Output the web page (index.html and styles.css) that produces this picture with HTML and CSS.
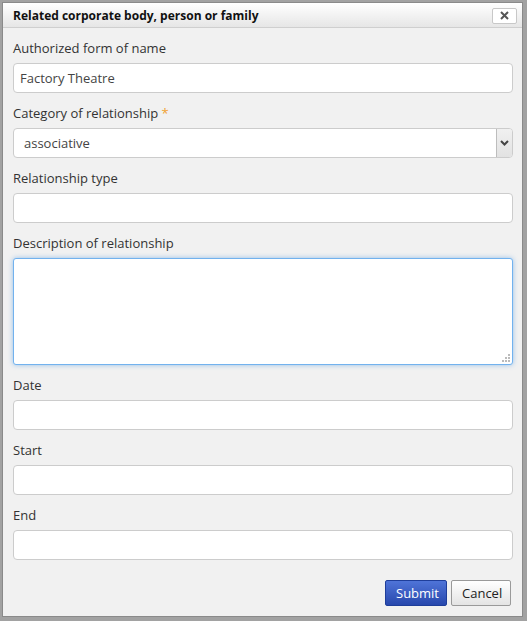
FILE: index.html
```html
<!DOCTYPE html>
<html>
<head>
<meta charset="utf-8">
<link rel="stylesheet" href="styles.css">
</head>
<body>
<div class="dialog">
  <div class="titlebar">
    <span class="title">Related corporate body, person or family</span>
    <button class="close" type="button">
      <svg width="9" height="9" viewBox="0 0 9 9"><path d="M1 1L8 8M8 1L1 8" stroke="#555" stroke-width="2"/></svg>
    </button>
  </div>
  <form class="body">
    <div class="field">
      <label>Authorized form of name</label>
      <div class="input">Factory Theatre</div>
    </div>
    <div class="field">
      <label>Category of relationship <span class="req">*</span></label>
      <div class="select">
        <span class="sel-text">associative</span>
        <span class="sel-btn"><svg width="9" height="6" viewBox="0 0 9 6"><path d="M1 1L4.5 4.5L8 1" stroke="#444" stroke-width="2" fill="none"/></svg></span>
      </div>
    </div>
    <div class="field">
      <label>Relationship type</label>
      <div class="input"></div>
    </div>
    <div class="field">
      <label>Description of relationship</label>
      <div class="textarea">
        <svg class="grip" width="9" height="9" viewBox="0 0 9 9" fill="#bbb">
          <rect x="6" y="0" width="2" height="2"/>
          <rect x="3" y="3" width="2" height="2"/><rect x="6" y="3" width="2" height="2"/>
          <rect x="0" y="6" width="2" height="2"/><rect x="3" y="6" width="2" height="2"/><rect x="6" y="6" width="2" height="2"/>
        </svg>
      </div>
    </div>
    <div class="field">
      <label>Date</label>
      <div class="input"></div>
    </div>
    <div class="field">
      <label>Start</label>
      <div class="input"></div>
    </div>
    <div class="field">
      <label>End</label>
      <div class="input"></div>
    </div>
    <div class="actions">
      <button type="button" class="btn primary">Submit</button>
      <button type="button" class="btn">Cancel</button>
    </div>
  </form>
</div>
</body>
</html>
```
FILE: styles.css
```css
html, body {
  margin: 0;
  height: 100%;
}
body {
  background: #a2a2a2;
  padding: 2px 0 0 2px;
  box-sizing: border-box;
  font-family: "Open Sans", "DejaVu Sans", sans-serif;
  font-size: 13px;
  color: #333;
}
.dialog {
  width: 521px;
  height: 615px;
  box-sizing: border-box;
  border: 1px solid #8a8a8a;
  background: #f1f1f1;
  display: flex;
  flex-direction: column;
}
.titlebar {
  height: 25px;
  box-sizing: border-box;
  background: linear-gradient(#ffffff, #e6e6e6);
  border-bottom: 1px solid #cfcfcf;
  display: flex;
  align-items: center;
  justify-content: space-between;
  padding: 0 5px 0 10px;
}
.title {
  font-weight: 700;
  font-size: 12px;
  color: #111;
}
.close {
  width: 25px;
  height: 16px;
  padding: 0;
  margin-top: 1px;
  background: #fff;
  border: 1px solid #c8c8c8;
  border-radius: 2px;
  display: flex;
  align-items: center;
  justify-content: center;
}
.body {
  margin: 0;
  padding: 10px 9px 0 10px;
  display: flex;
  flex-direction: column;
}
.field {
  display: flex;
  flex-direction: column;
  margin-bottom: 10px;
}
label {
  line-height: 20px;
  height: 20px;
  margin-bottom: 5px;
  color: #333;
}
.req {
  color: #f0a030;
}
.input, .select, .textarea {
  background: #fff;
  border: 1px solid #cccccc;
  border-radius: 4px;
  box-sizing: border-box;
}
.input {
  height: 30px;
  line-height: 28px;
  padding: 0 6px;
  color: #444;
}
.select {
  height: 30px;
  display: flex;
  align-items: center;
  justify-content: space-between;
  padding: 0 0 0 10px;
  color: #444;
}
.sel-btn {
  width: 16px;
  height: 28px;
  box-sizing: border-box;
  background: linear-gradient(#f0f0f0, #e2e2e2);
  border-left: 1px solid #bdbdbd;
  border-radius: 0 3px 3px 0;
  display: flex;
  align-items: center;
  justify-content: center;
}
.textarea {
  height: 107px;
  border-color: #72b2ee;
  box-shadow: 0 0 5px rgba(90, 160, 230, 0.6);
  border-radius: 3px;
  position: relative;
}
.grip {
  position: absolute;
  right: 1px;
  bottom: 1px;
}
.actions {
  display: flex;
  justify-content: flex-end;
  gap: 4px;
  margin-top: 10px;
  padding-right: 2px;
}
.btn {
  height: 26px;
  box-sizing: border-box;
  font-family: "Open Sans", "DejaVu Sans", sans-serif;
  font-size: 13px;
  padding: 0 10px;
  border-radius: 2px;
  border: 1px solid #9a9a9a;
  background: linear-gradient(#ffffff, #e4e4e4);
  color: #222;
  width: 60px;
}
.btn.primary {
  width: 62px;
  color: #fff;
  border: 1px solid #1f3e9a;
  background: linear-gradient(#4f74d8, #2848ad);
}
```
